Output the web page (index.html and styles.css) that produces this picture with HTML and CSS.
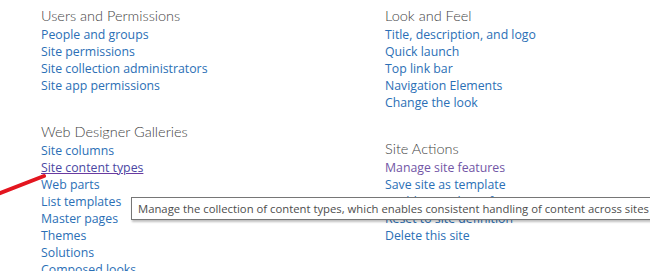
FILE: index.html
```html
<!DOCTYPE html>
<html>
<head>
<meta charset="utf-8">
<link rel="stylesheet" href="styles.css">
</head>
<body>
<div class="page">
  <div class="col">
    <div class="section">
      <h2 class="title">Users and Permissions</h2>
      <ul class="links">
        <li><a>People and groups</a></li>
        <li><a>Site permissions</a></li>
        <li><a>Site collection administrators</a></li>
        <li><a>Site app permissions</a></li>
      </ul>
    </div>
    <div class="section">
      <h2 class="title">Web Designer Galleries</h2>
      <ul class="links">
        <li><a>Site columns</a></li>
        <li><a class="hover">Site content types</a></li>
        <li><a>Web parts</a></li>
        <li><a>List templates</a></li>
        <li><a>Master pages</a></li>
        <li><a>Themes</a></li>
        <li><a>Solutions</a></li>
        <li><a>Composed looks</a></li>
      </ul>
    </div>
  </div>
  <div class="col">
    <div class="section">
      <h2 class="title">Look and Feel</h2>
      <ul class="links">
        <li><a>Title, description, and logo</a></li>
        <li><a>Quick launch</a></li>
        <li><a>Top link bar</a></li>
        <li><a>Navigation Elements</a></li>
        <li><a>Change the look</a></li>
      </ul>
    </div>
    <div class="section">
      <h2 class="title">Site Actions</h2>
      <ul class="links">
        <li><a class="visited">Manage site features</a></li>
        <li><a>Save site as template</a></li>
        <li><a>Enable search configuration export</a></li>
        <li><a>Reset to site definition</a></li>
        <li><a>Delete this site</a></li>
      </ul>
    </div>
  </div>
</div>
<div class="tooltip">Manage the collection of content types, which enables consistent handling of content across sites</div>
<svg class="arrow" width="60" height="40" viewBox="0 0 60 40"><line x1="-2" y1="38" x2="44" y2="20" stroke="#e3151f" stroke-width="4" stroke-linecap="round"/></svg>
</body>
</html>
```
FILE: styles.css
```css
html, body {
  margin: 0;
  padding: 0;
  background: #fff;
  overflow: hidden;
}
body {
  width: 650px;
  height: 271px;
  position: relative;
  font-family: "Open Sans", "Noto Sans", sans-serif;
}
.page {
  display: grid;
  grid-template-columns: 344px auto;
  padding: 6px 0 0 41px;
}
.section {
  margin-bottom: 28px;
}
.title {
  margin: 0;
  font-family: "Lato", "Open Sans", sans-serif;
  font-size: 14.5px;
  font-weight: 300;
  color: #444;
  line-height: 20px;
  white-space: nowrap;
}
.links {
  list-style: none;
  margin: 0;
  padding: 0;
}
.links li {
  line-height: 17px;
  height: 17px;
  font-size: 12.3px;
  white-space: nowrap;
}
.links a {
  color: #2b6fb6;
  text-decoration: none;
}
.links a.visited {
  color: #7256a6;
}
.links a.hover {
  color: #4a47a3;
  text-decoration: underline;
  text-decoration-color: #6b3aa0;
}
.tooltip {
  position: absolute;
  left: 131px;
  top: 197px;
  padding: 2px 6px;
  height: 17px;
  line-height: 17px;
  border: 1px solid #767676;
  background: #fff;
  color: #4d4d4d;
  font-size: 11.3px;
  white-space: nowrap;
  box-shadow: 1px 2px 2px rgba(0,0,0,0.25);
}
.arrow {
  position: absolute;
  left: 0;
  top: 156px;
}
```
